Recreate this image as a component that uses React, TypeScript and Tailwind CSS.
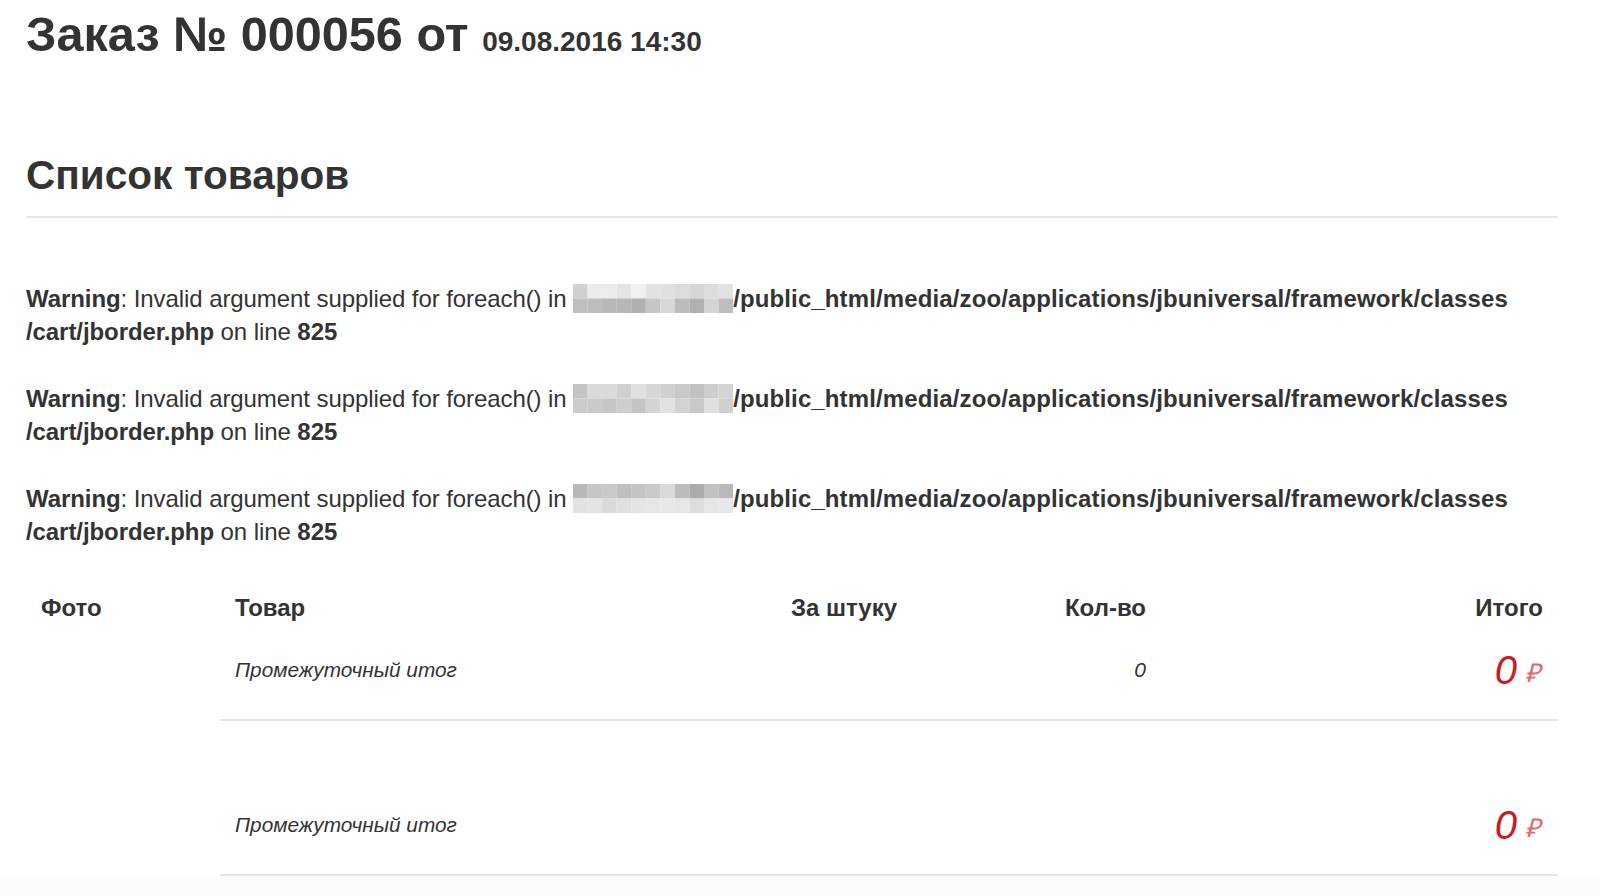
import React from 'react'

// pixelated "hidden path" blocks, 11 cols x 2 rows
const blurs: string[][][] = [
  [
    ['#d0d0d0', '#ececec', '#ececec', '#e4e4e4', '#f0f0f0', '#e2e2e2', '#e0e0e0', '#dcdcdc', '#d6d6d6', '#dcdcdc', '#e2e2e2'],
    ['#c0c0c0', '#bdbdbd', '#b8b8b8', '#b6b6b6', '#b0b0b0', '#c6c6c6', '#d8d8d8', '#bcbcbc', '#b0b0b0', '#d4d4d4', '#bdbdbd'],
  ],
  [
    ['#c4c4c4', '#dadada', '#dadada', '#cfcfcf', '#e0e0e0', '#d6d6d6', '#d0d0d0', '#c8c8c8', '#c2c2c2', '#cecece', '#d4d4d4'],
    ['#cccccc', '#cacaca', '#c6c6c6', '#cecece', '#c4c4c4', '#d4d4d4', '#e2e2e2', '#d2d2d2', '#c8c8c8', '#e0e0e0', '#d0d0d0'],
  ],
  [
    ['#b8b8b8', '#c6c6c6', '#c8c8c8', '#c0c0c0', '#c4c4c4', '#cacaca', '#dadada', '#bcbcbc', '#acacac', '#c2c2c2', '#bababa'],
    ['#e2e2e2', '#e4e4e4', '#dadada', '#e0e0e0', '#e4e4e4', '#e6e6e6', '#e8e8e8', '#e6e6e6', '#dcdcdc', '#e6e6e6', '#e8e8e8'],
  ],
]

function Mosaic({ cells }: { cells: string[][] }) {
  return (
    <svg width="160" height="29" viewBox="0 0 160 29" className="inline-block align-[-6px]">
      {cells.map((row, r) =>
        row.map((c, i) => (
          <rect key={`${r}-${i}`} x={i * 14.55} y={r * 14.5} width="14.6" height="14.5" fill={c} />
        ))
      )}
    </svg>
  )
}

function Warning({ cells }: { cells: string[][] }) {
  return (
    <div className="whitespace-nowrap">
      <b>Warning</b>: Invalid argument supplied for foreach() in <Mosaic cells={cells} />
      <b className="tracking-[0.12px]">/public_html/media/zoo/applications/jbuniversal/framework/classes</b>
      <br />
      <b>/cart/jborder.php</b> on line <b>825</b>
      <br />
      &nbsp;
    </div>
  )
}

function Subtotal({ qty }: { qty?: string }) {
  return (
    <div className="grid grid-cols-[194px_480px_212px_249px_397px]">
      <div />
      <div className="col-span-4 grid grid-cols-[480px_212px_249px_397px] items-center border-b-2 border-[#e6e6e6] pt-[18px] pb-[29px]">
        <div className="h-[40px] flex items-center pl-[15px] italic text-[20.8px]">Промежуточный итог</div>
        <div />
        <div className="h-[40px] flex items-center justify-end pr-[15px] italic text-[21px]">{qty}</div>
        <div className="h-[40px] flex items-center justify-end pr-[18px] italic">
          <span className="text-[40px] leading-none text-[#cc1b1f]">0</span>
          <span className="ml-[8px] text-[26px] leading-none text-[#e06a6c] translate-y-[3px]">₽</span>
        </div>
      </div>
    </div>
  )
}

export default function App() {
  return (
    <div className="min-h-screen bg-white text-[#333] font-['Liberation_Sans',Arial,sans-serif]">
      <div className="ml-[26px] w-[1532px]">
        <h1 className="pt-[10px] text-[48.6px] leading-none font-bold whitespace-nowrap">
          Заказ № 000056 от <span className="text-[28px]">09.08.2016 14:30</span>
        </h1>

        <h2 className="mt-[96px] pb-[21px] border-b-2 border-[#e6e6e6] text-[40.6px] leading-none font-bold">
          Список товаров
        </h2>

        <div className="mt-[64px] text-[24px] leading-[33.3px] tracking-[-0.08px]">
          {blurs.map((b, i) => (
            <Warning key={i} cells={b} />
          ))}
        </div>

        {/* таблица */}
        <div className="text-[24px]">
          <div className="grid grid-cols-[194px_480px_212px_249px_397px] h-[48px] items-center font-bold mt-[2px]">
            <div className="pl-[15px]">Фото</div>
            <div className="pl-[15px]">Товар</div>
            <div className="pr-[15px] text-right">За штуку</div>
            <div className="pr-[15px] text-right">Кол-во</div>
            <div className="pr-[15px] text-right">Итого</div>
          </div>
          <Subtotal qty="0" />
          <div className="h-[66px]" />
          <Subtotal />
        </div>
      </div>
      <div className="h-[40px] bg-[#fcfcfc]" />
    </div>
  )
}
